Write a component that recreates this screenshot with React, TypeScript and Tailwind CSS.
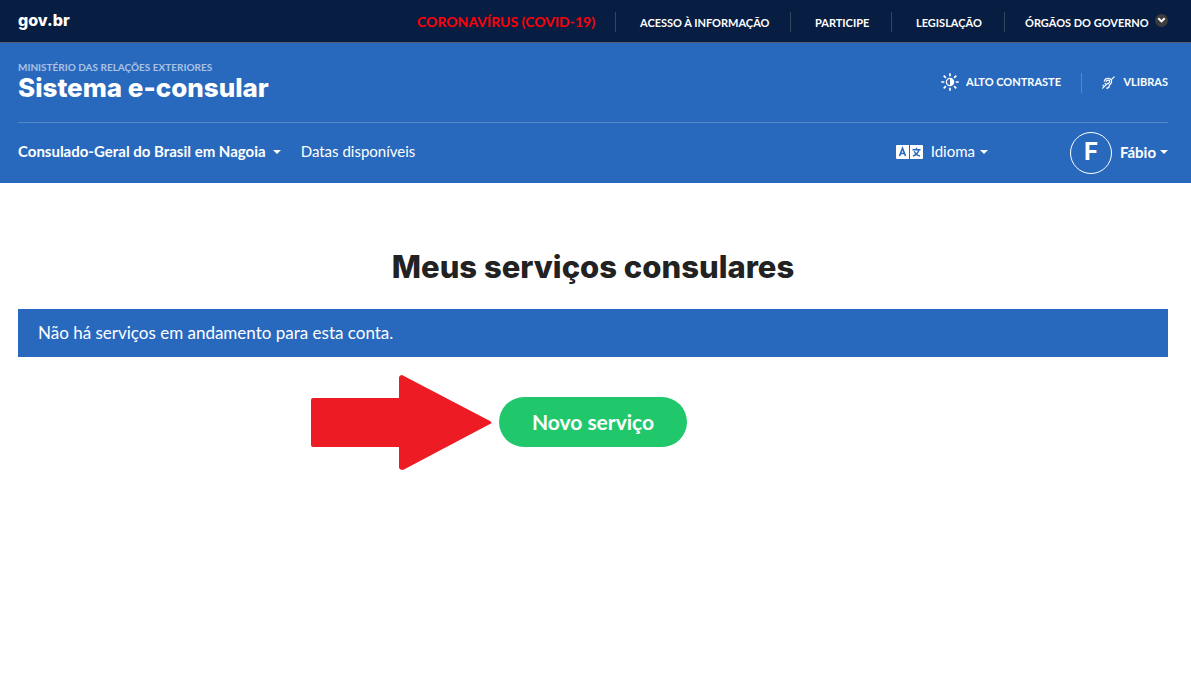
import React from "react";

function Caret() {
  return (
    <svg viewBox="0 0 8 4" className="h-1 w-2 shrink-0" aria-hidden="true">
      <path d="M0 0h8L4 4z" fill="currentColor" />
    </svg>
  );
}

function ContrastIcon() {
  return (
    <svg viewBox="0 0 18 18" className="size-[18px]" fill="none" stroke="currentColor" strokeWidth="1.7" aria-hidden="true">
      <circle cx="9" cy="9" r="3.6" strokeWidth="1.3" />
      <path d="M9 5.5a3.5 3.5 0 0 1 0 7z" fill="currentColor" stroke="none" />
      <path d="M9 0.3v3M9 14.7v3M0.3 9h3M14.7 9h3M2.7 2.7l2.2 2.2M13.1 13.1l2.2 2.2M2.7 15.3l2.2-2.2M13.1 4.9l2.2-2.2" />
    </svg>
  );
}

function DeafIcon() {
  return (
    <svg viewBox="0 0 13 13" className="size-[13px]" fill="none" stroke="currentColor" strokeWidth="1.2" strokeLinecap="round" aria-hidden="true">
      <path d="M0.7 12.2 5.6 7.3M9.6 3.4 12.2 0.8" />
      <path d="M2.3 5.2C2.8 3.4 4.3 2.4 6 2.4c2.3 0 3.9 1.5 3.6 3.6-.3 1.9-2 2.2-2.3 3.9-.2 1.5-1.1 2.3-2.6 2.3" />
      <path d="M4.2 5.7c.3-1 1-1.5 1.9-1.5 1.1 0 1.8.8 1.5 1.9-.2.8-1 .9-1.3 1.7M1 9.2l.9.9M3 7.3l.9.9" />
    </svg>
  );
}

function LanguageIcon() {
  return (
    <svg viewBox="0 0 27 14" className="h-[14px] w-[27px]" aria-hidden="true">
      <path d="M1 0h12v14H1a1 1 0 0 1-1-1V1a1 1 0 0 1 1-1zM14 0h12a1 1 0 0 1 1 1v12a1 1 0 0 1-1 1H14z" fill="#fff" />
      <path d="M3.5 11 6.5 3.2 9.5 11M4.6 8.5h3.8" fill="none" stroke="#2869bd" strokeWidth="1.6" />
      <path d="M16.5 4.7h8M20.5 2.8v1.9M22.8 5c-.6 2.8-2.6 4.9-5.8 6M18.3 6.2c.8 2.3 2.8 4 5.7 4.8" fill="none" stroke="#2869bd" strokeWidth="1.4" />
    </svg>
  );
}

function ChevronBadge() {
  return (
    <svg viewBox="0 0 13 13" className="size-[13px] shrink-0" aria-hidden="true">
      <circle cx="6.5" cy="6.5" r="6.5" fill="#3c3c3c" />
      <path d="M3.3 4.2 6.5 7.4 9.7 4.2" fill="none" stroke="#fff" strokeWidth="2" />
    </svg>
  );
}

const topLink = "flex h-5 items-center border-l border-[#33445f] pt-1 pl-6 text-[11px] font-bold whitespace-nowrap";

export default function App() {
  return (
    <div className="min-h-screen bg-white font-['Lato',sans-serif] text-white">
      <div className="flex h-[43px] items-center justify-between border-b border-[#4d6078] bg-[#071d41] pr-[23px] pl-[18px]">
        <a href="#" className="pb-[2px] font-['Inter',sans-serif] text-base font-extrabold">gov.br</a>
        <nav className="flex items-center pt-px" aria-label="Governo">
          <a href="#" className="pr-5 text-[14px] font-bold whitespace-nowrap text-[#ff0009]">CORONAVÍRUS (COVID-19)</a>
          <a href="#" className={`${topLink} w-[175px]`}>ACESSO À INFORMAÇÃO</a>
          <a href="#" className={`${topLink} w-[101px]`}>PARTICIPE</a>
          <a href="#" className={`${topLink} w-[113px]`}>LEGISLAÇÃO</a>
          <button type="button" className="flex h-5 w-[164px] items-center justify-between border-l border-[#33445f] pl-5 text-[11px] font-bold whitespace-nowrap">
            <span className="pt-1">ÓRGÃOS DO GOVERNO</span>
            <span className="pb-[2px]"><ChevronBadge /></span>
          </button>
        </nav>
      </div>

      <header className="bg-[#2869bd] pr-[23px] pl-[18px]">
        <div className="flex h-20 items-center justify-between border-b border-[#5387ca]">
          <div className="pb-1">
            <p className="text-[10px] leading-[14px] font-bold text-[#a9c3e5]">MINISTÉRIO DAS RELAÇÕES EXTERIORES</p>
            <p className="font-['Inter',sans-serif] text-[26px] leading-7 font-extrabold">Sistema e-consular</p>
          </div>
          <div className="flex items-center text-[11px] font-bold">
            <button type="button" className="flex w-[140px] items-center gap-[7px] pb-px">
              <ContrastIcon />
              ALTO CONTRASTE
            </button>
            <a href="#" className="flex h-5 w-[87px] items-center justify-between border-l border-[#5387ca] pl-5">
              <DeafIcon />
              VLIBRAS
            </a>
          </div>
        </div>
        <div className="flex h-[60px] items-center justify-between text-[15px]">
          <nav className="flex items-center gap-5 pb-[3px]" aria-label="Principal">
            <button type="button" className="flex items-center gap-[7px] font-bold">
              Consulado-Geral do Brasil em Nagoia
              <Caret />
            </button>
            <a href="#">Datas disponíveis</a>
          </nav>
          <div className="flex items-center gap-[82px]">
            <button type="button" className="flex items-center gap-2 pb-[3px]">
              <LanguageIcon />
              <span className="flex items-center gap-[5px]">Idioma <Caret /></span>
            </button>
            <button type="button" className="flex items-center gap-2 font-bold">
              <span className="flex size-[42px] items-center justify-center rounded-full border border-white pb-[2px] font-['Inter',sans-serif] text-2xl">F</span>
              <span className="flex items-center gap-1 pb-[2px]">Fábio <Caret /></span>
            </button>
          </div>
        </div>
      </header>

      <main className="flex flex-col items-center pt-16 pr-[23px] pl-[18px]">
        <h1 className="text-center font-['Inter',sans-serif] text-[31px] leading-10 font-extrabold text-[#222]">Meus serviços consulares</h1>
        <p className="mt-[22px] w-full bg-[#2869bd] px-5 py-3 text-[17px] leading-6">Não há serviços em andamento para esta conta.</p>
        <div className="relative mt-10">
          <button type="button" className="h-[50px] min-w-[188px] rounded-full bg-[#21c86b] px-8 text-[21px] font-bold">Novo serviço</button>
          <svg viewBox="0 0 181 95" className="absolute -top-[22px] right-full mr-[7px] h-[95px] w-[181px]" aria-hidden="true">
            <path d="M2 23H88V2Q89 0 91 0L179 46Q182 48 179 49L92 95Q89 95 88 93V72H2Q0 72 0 70V25Q0 23 2 23z" fill="#ed1c24" />
          </svg>
        </div>
      </main>
    </div>
  );
}
